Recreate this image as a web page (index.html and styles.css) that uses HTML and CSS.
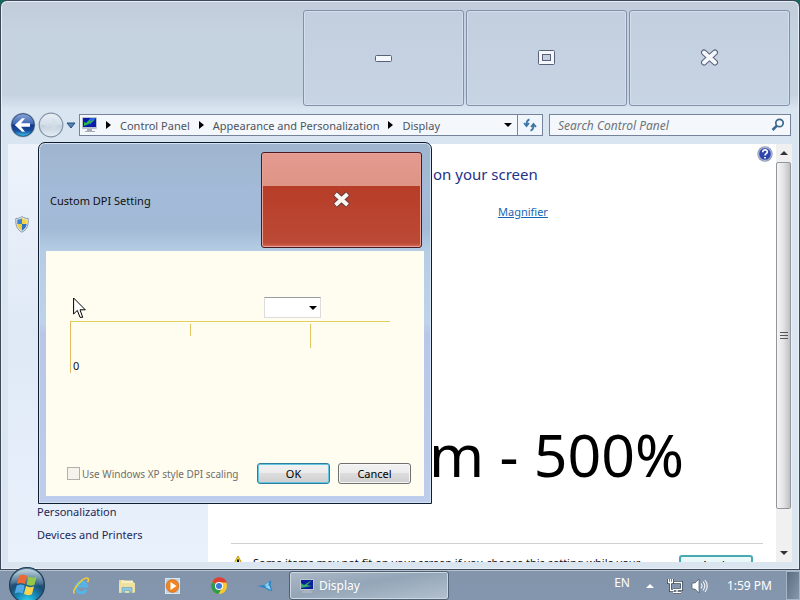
FILE: index.html
```html
<!DOCTYPE html>
<html lang="en">

<head>
  <meta charset="utf-8">
  <meta name="viewport" content="width=device-width, initial-scale=1.0">
  <title>Display</title>
  <link rel="stylesheet" href="styles.css">
</head>

<body>
  <div class="window">
    <div class="caption">
      <button type="button" class="caption-button" aria-label="Minimize">
        <svg width="18" height="8" viewBox="0 0 18 8"><rect x=".5" y="1.500" width="16" height="6" rx="1" fill="#f4f7fc" stroke="#5a6079"/></svg>
      </button>
      <button type="button" class="caption-button" aria-label="Restore">
        <svg width="18" height="16" viewBox="0 0 18 16"><rect x=".5" y=".5" width="16" height="14" rx="1" fill="#f4f7fc" stroke="#5a6079"/><rect x="4.500" y="4.500" width="8" height="6" fill="#c3cfe0" stroke="#5a6079"/></svg>
      </button>
      <button type="button" class="caption-button" aria-label="Close">
        <svg width="20" height="18" viewBox="0 0 20 18"><path d="M4 3.500 15 13.500M15 3.500 4 13.500" stroke="#5a6079" stroke-width="6" stroke-linecap="round"/><path d="M4 3.500 15 13.500M15 3.500 4 13.500" stroke="#f4f7fc" stroke-width="4" stroke-linecap="round"/></svg>
      </button>
    </div>

    <!-- back, forward, address and search -->
    <div class="navbar">
      <div class="travel">
        <button type="button" class="round-button back" aria-label="Back">
          <svg width="26" height="26" viewBox="0 0 26 26">
            <defs>
              <linearGradient id="backfill" x1="0" y1="0" x2="0" y2="1"><stop offset="0" stop-color="#8aa6d8"/><stop offset=".45" stop-color="#4067b4"/><stop offset=".5" stop-color="#13368c"/><stop offset=".75" stop-color="#174c9e"/><stop offset="1" stop-color="#3cc8f5"/></linearGradient>
            </defs>
            <circle cx="13" cy="13" r="12.300" fill="#9ba9bb"/><circle cx="13" cy="13" r="11.300" fill="url(#backfill)" stroke="#23406f" stroke-width=".8"/>
            <path d="M4.800 13 12 6.300h3L11 11.200h9v3.600h-9l4 4.900h-3z" fill="#fff"/>
          </svg>
        </button>
        <button type="button" class="round-button forward" aria-label="Forward">
          <svg width="26" height="26" viewBox="0 0 26 26">
            <defs>
              <linearGradient id="forwardfill" x1="0" y1="0" x2="0" y2="1"><stop offset="0" stop-color="#e9f0f6"/><stop offset=".48" stop-color="#d3dee9"/><stop offset=".52" stop-color="#c3d0dd"/><stop offset="1" stop-color="#e6eff7"/></linearGradient>
            </defs>
            <circle cx="13" cy="13" r="11.800" fill="url(#forwardfill)" stroke="#8493a5" stroke-width="1.200"/>
            <path d="M21 13l-7-6.500V11H7v4h7v4.500z" fill="#d3dde7" opacity=".7"/>
          </svg>
        </button>
        <svg class="recent" width="10" height="7" viewBox="0 0 10 7"><path d="M1 1h8L5 6z" fill="#4b83bb" stroke="#29507c"/></svg>
      </div>
      <nav class="address">
        <svg class="monitor" width="15" height="16" viewBox="0 0 15 16"><rect x="0" y="0" width="15" height="12" rx="1" fill="#b9c2cc"/><rect x="1" y="1" width="13" height="9" fill="#0a1cab"/><path d="M8 1h6L8 8z" fill="#2766dd"/><path d="M2 9V5l2 1 4-4v2l5-1-6 4z" fill="#2cb84e"/><path d="M5 12h5v2h3v1H3v-1h2z" fill="#a3acb7"/></svg>
        <span class="crumb-arrow"></span>
        <a href="#">Control Panel</a>
        <span class="crumb-arrow"></span>
        <a href="#">Appearance and Personalization</a>
        <span class="crumb-arrow"></span>
        <a href="#">Display</a>
        <span class="drop-arrow"></span>
      </nav>
      <button type="button" class="refresh" aria-label="Refresh">
        <svg width="14" height="14" viewBox="0 0 14 14" fill="none" stroke="#3b76a6" stroke-width="1.800"><path d="M6.500 1.500C4 2 3.500 3.500 3.500 7M1 5l2.500 3L6 5"/><path d="M7.500 12.500c2.500-.5 3-2 3-5.500M8 9l2.500-3L13 9" /></svg>
      </button>
      <div class="search">
        <input type="text" placeholder="Search Control Panel" aria-label="Search Control Panel">
        <svg width="14" height="14" viewBox="0 0 14 14" fill="none" stroke="#39688f"><circle cx="8.500" cy="5" r="3.700" stroke-width="1.700"/><path d="M5.700 7.800 1.500 12" stroke-width="2.500"/></svg>
      </div>
    </div>

    <div class="content">
      <div class="sidebar">
        <svg class="shield" width="14" height="17" viewBox="0 0 14 17"><path d="M7 .6C5 2 3 2.500.8 2.500c-.3 6 .7 11 6.200 13.700 5.500-2.700 6.500-7.700 6.200-13.700C11 2.500 9 2 7 .6z" fill="#e6ebf0" stroke="#8796a5"/><path d="M7 2.300C5.300 3.300 4 3.600 2.200 3.700L2.300 8H7z" fill="#3d86cd"/><path d="M7 2.300c1.700 1 3 1.300 4.800 1.400L11.700 8H7z" fill="#f4d54a"/><path d="M2.300 8H7v6.700C4 13 2.700 11 2.300 8z" fill="#f0cc3a"/><path d="M11.700 8H7v6.700c3-1.700 4.300-3.700 4.700-6.700z" fill="#2e73bd"/></svg>
        <div class="see-also">
          <a href="#">Personalization</a>
          <a href="#">Devices and Printers</a>
        </div>
      </div>
      <div class="main">
        <button type="button" class="help" aria-label="Help">
          <svg width="16" height="16" viewBox="0 0 16 16"><circle cx="8" cy="8" r="7.700" fill="#8c96ae"/><circle cx="8" cy="8" r="6.300" fill="#2f45ae" stroke="#e1e7f5" stroke-width=".7"/><path d="M5.700 6.200C5.700 3 10.500 3.300 10.300 6 10.200 7.700 8 7.600 8 9.500M8 11v1.600" fill="none" stroke="#fff" stroke-width="1.700"/></svg>
        </button>
        <h1>on your screen</h1>
        <p class="magnifier"><a href="#">Magnifier</a></p>
        <p class="size-label">m - 500%</p>
        <div class="warning">
          <svg width="14" height="14" viewBox="0 0 14 14"><path d="M7 1 13.300 13H.7z" fill="#f7dd2d" stroke="#b99a10"/><path d="M7 4.500V9M7 10.300V12" stroke="#111" stroke-width="2"/></svg>
          <span>Some items may not fit on your screen if you choose this setting while your</span>
          <button type="button" class="apply">Apply</button>
        </div>
      </div>
      <div class="scrollbar">
        <span class="scroll-arrow up"></span>
        <span class="thumb"><i></i><i></i><i></i></span>
        <span class="track"></span>
        <span class="scroll-arrow down"></span>
      </div>
    </div>
  </div>

  <div class="dialog" role="dialog" aria-labelledby="dialogtitle">
    <div class="dialog-title">
      <h2 id="dialogtitle">Custom DPI Setting</h2>
      <button type="button" class="dialog-close" aria-label="Close">
        <svg width="20" height="18" viewBox="0 0 20 18"><path d="M3 2.500 16 14.500M16 2.500 3 14.500" stroke="#693c3c" stroke-width="6"/><path d="M3.500 3 15.500 14M15.500 3 3.500 14" stroke="#fbf8f3" stroke-width="4"/></svg>
      </button>
    </div>
    <form class="dialog-body">
      <div class="combo">
        <select aria-label="Percentage of normal size"><option></option></select>
      </div>
      <div class="ruler">
        <span class="zero">0</span>
        <span class="tick"></span>
        <span class="tick long"></span>
      </div>
      <div class="dialog-footer">
        <input type="checkbox" id="xpscaling" disabled>
        <label for="xpscaling">Use Windows XP style DPI scaling</label>
        <button type="button" class="push-button default">OK</button>
        <button type="button" class="push-button">Cancel</button>
      </div>
    </form>
  </div>

  <div class="taskbar">
    <button type="button" class="start" aria-label="Start">
      <svg width="38" height="38" viewBox="0 0 38 38">
        <defs>
          <radialGradient id="orb" cx=".5" cy="1" r=".9"><stop offset="0" stop-color="#35dbf5"/><stop offset=".35" stop-color="#1689b8"/><stop offset=".65" stop-color="#1c4c74"/><stop offset="1" stop-color="#597d96"/></radialGradient>
          <linearGradient id="shine" x1="0" y1="0" x2="0" y2="1"><stop offset="0" stop-color="#d5e4ec" stop-opacity=".85"/><stop offset="1" stop-color="#8db2c4" stop-opacity=".15"/></linearGradient>
        </defs>
        <circle cx="19" cy="19" r="17.500" fill="url(#orb)" stroke="#233f57" stroke-width="1.200"/>
        <path d="M3 18C3-2 35-2 35 18 25 23 13 15 3 18z" fill="url(#shine)"/>
        <path d="M11 10c3-2 5-1.500 8 0l-2 8c-3-1.500-5-1.500-8 0z" fill="#ee6835"/>
        <path d="M20.500 10.500c3 1.500 5 1.500 8 .2l-2 8c-3 1.300-5 1.300-8-.2z" fill="#96c847"/>
        <path d="M8.700 19.500c3-1.500 5-1.500 8 0l-2 8c-3-1.500-5-1.500-8 0z" fill="#51a8e3"/>
        <path d="M18 20c3 1.500 5 1.500 8 .2l-2 8c-3 1.300-5 1.300-8-.2z" fill="#fad44c"/>
      </svg>
    </button>
    <div class="quick-launch">
      <button type="button" aria-label="Internet Explorer">
        <svg width="18" height="18" viewBox="0 0 18 18" fill="none"><path d="M14.300 12.500A5.300 5.300 0 1 1 14.500 9H5" stroke="#53b5ea" stroke-width="3"/><path d="M2.500 16.500C-1.500 14 12-1.500 16 1.500c1 .7.300 2.500-.5 3.500" stroke="#f0ca3a" stroke-width="1.600"/></svg>
      </button>
      <button type="button" aria-label="Windows Explorer">
        <svg width="18" height="18" viewBox="0 0 18 18"><path d="M1 3h5l1.500 2H16v11H1z" fill="#e6d488"/><path d="M3 3.500h12V8H3z" fill="#f8efbd"/><path d="M1 6h16v9.500H1z" fill="#eee0a1"/><path d="M4 16v-5.500h10V16h-2.500v-2.500h-5V16z" fill="#8fc5e6" stroke="#689db9" stroke-width=".6"/></svg>
      </button>
      <button type="button" aria-label="Media Player">
        <svg width="16" height="16" viewBox="0 0 16 16"><rect x=".5" y=".5" width="14" height="15" fill="#bed1df" stroke="#dde8ee"/><circle cx="7.500" cy="8" r="6.400" fill="#f08422" stroke="#ce6412" stroke-width=".6"/><path d="M5.500 4 11.500 8l-6 4z" fill="#fff"/></svg>
      </button>
      <button type="button" aria-label="Chrome">
        <svg width="18" height="18" viewBox="0 0 18 18"><circle cx="9" cy="9" r="8" fill="#fbc92c"/><path d="M9 9 2.100 5A8 8 0 0 1 16.900 5.500H9z" fill="#df4030"/><path d="M9 9 2.100 5A8 8 0 0 0 8.500 17L12 11z" fill="#329a4e"/><circle cx="9" cy="9" r="4" fill="#fff"/><circle cx="9" cy="9" r="3" fill="#3c79dd"/></svg>
      </button>
      <button type="button" aria-label="Plane">
        <svg width="18" height="14" viewBox="0 0 18 14"><path d="M1 7 5 6.500 8 6 14 2l1.500-.5L14.500 6 16.500 12 13 11.500 8.500 9 5 8z" fill="#2b86c7"/><path d="M8 6.500l5-3.500-1 4zM9 8l6 3-2-5z" fill="#94d5f4"/></svg>
      </button>
    </div>
    <button type="button" class="task">
      <svg width="14" height="14" viewBox="0 0 14 14"><rect x="0" y="0" width="14" height="11" rx="1" fill="#bcc7d2"/><rect x="1" y="1" width="12" height="9" fill="#0a1d9c"/><path d="M1 9V4l3 2 8-5-5 5 5 1z" fill="#35ad68"/><path d="M4 11h6v1h2v2H2v-2h2z" fill="#aab4bf"/></svg>
      Display
    </button>
    <div class="tray">
      <span class="language">EN</span>
      <span class="tray-arrow"></span>
      <svg class="network" width="16" height="16" viewBox="0 0 16 16" fill="none"><path d="M1.500 1v3.500h4V1M3.500 1v11.500H7M7 4.500h7.500v7H6M10 12v2.500M6 14.500h8" stroke="#3a4758" stroke-width="3"/><path d="M1.500 1v3.500h4V1M3.500 1v11.500H7M7 4.500h7.500v7H6M10 12v2.500M6 14.500h8" stroke="#fff" stroke-width="1.300"/></svg>
      <svg width="17" height="16" viewBox="0 0 17 16"><path d="M1 5h3l4-4v14l-4-4H1z" fill="#fff" stroke="#475467" stroke-width=".7"/><path d="M10 5.500q2 2.500 0 5M12 3.500q3.500 4.500 0 9M14 2q4.500 6 0 12" fill="none" stroke="#edf2f7" stroke-width="1.200"/></svg>
      <time>1:59 PM</time>
    </div>
    <button type="button" class="show-desktop" aria-label="Show desktop"></button>
  </div>

  <svg class="cursor" width="13" height="22" viewBox="0 0 13 22"><path d="M.6 1v16l3.700-3.600L7 20.300h2.700L7 12.800h5.300z" fill="#fff" stroke="#000"/></svg>
</body>

</html>
```
FILE: styles.css
```css
* {
  box-sizing: border-box;
}

body {
  margin: 0;
  height: 100vh;
  display: flex;
  flex-direction: column;
  overflow: hidden;
  background-color: #11695c;
  font-family: "Noto Sans", "Open Sans", sans-serif;
  font-size: 11px;
  color: #111;
}

button {
  font: inherit;
  padding: 0;
  margin: 0;
  display: flex;
  flex: none;
  align-items: center;
  justify-content: center;
}

svg {
  display: block;
  flex: none;
}

h1,
h2,
p {
  margin: 0;
  font-weight: normal;
}

/* main window */
.window {
  flex: 1;
  min-height: 0;
  display: flex;
  flex-direction: column;
  padding: 0 7px 7px;
  border: 1px solid #3e4859;
  border-radius: 7px 7px 0 0;
  background: linear-gradient(#c2ccda 0, #c5d2e0 30px, #c5d3e1 94px, #d9e5f0 108px, #dae5f0 100%);
  box-shadow: inset 0 0 0 1px #e7eff7;
}

.caption {
  display: flex;
  justify-content: flex-end;
  gap: 2px;
  padding: 9px 2px 0 0;
}

.caption-button {
  width: 161px;
  height: 96px;
  border: 1px solid #8290a9;
  border-radius: 3px;
  background: linear-gradient(#c3cfdf, #c7d4e4);
  box-shadow: inset 0 0 0 1px #d2deeb;
}

.navbar {
  display: flex;
  align-items: center;
  height: 38px;
  padding: 0 1px 0 2px;
}

.travel {
  display: flex;
  align-items: center;
  gap: 2px;
  width: 69px;
}

.round-button {
  border: none;
  background: none;
}

.address {
  flex: 1;
  display: flex;
  align-items: center;
  height: 22px;
  padding: 0 5px 0 2px;
  border: 1px solid #76849b;
  background-color: #f4f8fc;
}

.address a {
  color: #4d535d;
  text-decoration: none;
}

.crumb-arrow {
  margin: 0 9px;
  border: 4px solid transparent;
  border-left: 5px solid #000;
  border-right: 0;
}

.drop-arrow {
  margin-left: auto;
  border: 4px solid transparent;
  border-top: 4px solid #000;
  border-bottom: 0;
}

.refresh {
  width: 25px;
  height: 22px;
  border: 1px solid #76849b;
  border-left: none;
  background-color: #f0f6fb;
}

.search {
  display: flex;
  align-items: center;
  width: 242px;
  height: 22px;
  margin-left: 6px;
  padding: 0 5px 0 8px;
  border: 1px solid #76849b;
  background-color: #f4f8fc;
}

.search input {
  flex: 1;
  min-width: 0;
  padding: 0;
  border: none;
  outline: none;
  background: none;
  font: inherit;
  font-size: 12px;
  font-style: italic;
}

.search input::placeholder {
  color: #6e737a;
}

.content {
  flex: 1;
  min-height: 0;
  display: flex;
  overflow: hidden;
  background-color: #fff;
}

.sidebar {
  width: 200px;
  display: flex;
  flex-direction: column;
  justify-content: space-between;
  padding: 72px 7px 16px;
  background: linear-gradient(#eef3fb, #dfe9f6 45%, #e9f1fc);
}

.see-also {
  display: flex;
  flex-direction: column;
  padding-left: 22px;
  line-height: 23px;
}

.see-also a {
  color: #1d2858;
  text-decoration: none;
}

.main {
  flex: 1;
  min-width: 0;
  position: relative;
  padding: 18px 13px 0 23px;
}

.help {
  position: absolute;
  top: 2px;
  right: 3px;
  border: none;
  background: none;
}

.main h1 {
  padding-left: 202px;
  font-size: 15px;
  line-height: 24px;
  color: #1e3287;
}

.magnifier {
  margin-top: 16px;
  padding-left: 267px;
  line-height: 20px;
}

.magnifier a {
  color: #1766b5;
}

.size-label {
  height: 321px;
  padding: 190px 0 0 198px;
  font-size: 59px;
  line-height: 84px;
  white-space: nowrap;
  color: #000;
}

.warning {
  display: flex;
  align-items: flex-start;
  gap: 8px;
  padding-top: 11px;
  border-top: 1px solid #d0d0d0;
  white-space: nowrap;
}

.apply {
  width: 74px;
  height: 24px;
  margin: 0 10px 0 auto;
  border: 2px solid #48a9b5;
  border-radius: 3px;
  background: linear-gradient(#eefafa, #d4eef1);
  line-height: 16px;
  align-items: flex-start;
}

.scrollbar {
  width: 16px;
  display: flex;
  flex-direction: column;
  background-color: #f0f0f1;
}

.scroll-arrow {
  height: 18px;
  display: flex;
  align-items: center;
  justify-content: center;
}

.scroll-arrow::before {
  content: "";
  border: 4px solid transparent;
}

.up::before {
  border-top: 0;
  border-bottom-color: #333;
}

.down::before {
  border-bottom: 0;
  border-top-color: #333;
}

.thumb {
  flex: 347;
  display: flex;
  flex-direction: column;
  align-items: center;
  justify-content: center;
  gap: 2px;
  margin-right: 1px;
  border: 1px solid #93979c;
  border-radius: 2px;
  background: linear-gradient(to right, #f5f5f6, #e3e3e5 50%, #bfc0c3);
}

.thumb i {
  width: 8px;
  height: 1px;
  background-color: #555;
}

.track {
  flex: 35;
}

/* dialog window over the main one */
.dialog {
  position: absolute;
  left: 38px;
  top: 142px;
  width: 394px;
  padding: 0 7px 7px;
  border: 1px solid #101c30;
  border-radius: 7px 7px 0 0;
  background: linear-gradient(#9fb5ce 0, #a3bbd8 50px, #a2bad6 86px, #b5cde4 108px, #bdd3ea 180px, #b9c6e8 190px, #bdcdeb 100%);
  box-shadow: inset 0 0 0 1px #d3e3f1;
}

.dialog-title {
  display: flex;
  align-items: flex-start;
  justify-content: space-between;
  height: 108px;
  padding: 9px 2px 0 4px;
}

.dialog-title h2 {
  font-size: 11px;
  line-height: 98px;
}

.dialog-close {
  width: 161px;
  height: 96px;
  border: 1px solid #4a1b25;
  border-radius: 3px;
  background: linear-gradient(#e59a90, #dd9586 33px, #b73d28 33px, #bc4a36 90px, #d76c58);
  box-shadow: inset 0 0 0 1px #e9a298;
}

.dialog-body {
  height: 245px;
  display: flex;
  flex-direction: column;
  padding: 46px 13px 12px 21px;
  background-color: #fffcf0;
}

.combo {
  align-self: flex-end;
  position: relative;
  width: 57px;
  margin-right: 90px;
}

.combo select {
  display: block;
  width: 100%;
  height: 21px;
  appearance: none;
  border: 1px solid #dcdcdc;
  border-top-color: #9a9a9f;
  border-radius: 0;
  background-color: #fff;
}

.combo::after {
  content: "";
  position: absolute;
  right: 4px;
  top: 9px;
  border: 4px solid transparent;
  border-top-color: #000;
  border-bottom: 0;
}

.ruler {
  display: flex;
  width: 320px;
  height: 52px;
  margin: 3px 0 0 3px;
  border-top: 1px solid #e3d05a;
  border-left: 1px solid #e2bb64;
}

.zero {
  align-self: flex-end;
  width: 119px;
  padding-left: 2px;
  line-height: 14px;
}

.tick {
  width: 120px;
  height: 12px;
  margin-top: 2px;
  border-left: 1px solid #e0c662;
}

.long {
  width: 79px;
  height: 24px;
}

.dialog-footer {
  display: flex;
  align-items: center;
  margin-top: auto;
}

.dialog-footer input {
  flex: none;
  appearance: none;
  width: 13px;
  height: 13px;
  margin: 0 2px 0 0;
  border: 1px solid #b1b1aa;
  background-color: #f4f3ec;
}

.dialog-footer label {
  flex: 1;
  font-size: 10px;
  color: #6f6f68;
  white-space: nowrap;
}

.push-button {
  width: 73px;
  height: 21px;
  margin-left: 8px;
  border: 1px solid #707070;
  border-radius: 3px;
  background: linear-gradient(#f2f2f2, #ebebeb 50%, #dddddd 50%, #cfcfcf);
  box-shadow: inset 0 0 0 1px #f8f8f8;
}

.default {
  border-color: #2f7c9f;
  box-shadow: inset 0 0 0 1px #63c6e2;
}

/* taskbar */
.taskbar {
  position: relative;
  height: 30px;
  display: flex;
  align-items: center;
  padding-left: 58px;
  border-top: 1px solid #b5c2d1;
  background: linear-gradient(#8295ab, #8396ae);
  font-size: 12px;
  color: #fff;
}

.start {
  position: absolute;
  left: 8px;
  bottom: -4px;
  border: none;
  background: none;
}

.quick-launch {
  display: flex;
}

.quick-launch button {
  width: 46px;
  height: 28px;
  border: none;
  background: none;
}

.task {
  width: 160px;
  height: 29px;
  justify-content: flex-start;
  gap: 5px;
  margin-left: 1px;
  padding-left: 10px;
  border: 1px solid #4f6072;
  border-radius: 3px;
  background: linear-gradient(to bottom right, #acb9c7, #93a5b7 45%, #b3c1ce);
  box-shadow: inset 0 0 0 1px #ccd7e1;
  color: #fff;
}

.tray {
  display: flex;
  align-items: center;
  margin-left: auto;
}

.language {
  line-height: 20px;
  padding-bottom: 5px;
}

.tray-arrow {
  margin: 0 13px 0 16px;
  border: 4px solid transparent;
  border-top: 0;
  border-bottom-color: #fff;
}

.network {
  margin-right: 8px;
}

.tray time {
  margin: 0 14px 0 19px;
}

.show-desktop {
  width: 14px;
  height: 29px;
  border: 1px solid #a6b5c5;
  background: linear-gradient(to bottom right, #5b6d80, #8598ab);
}

.cursor {
  position: absolute;
  left: 73px;
  top: 297px;
}
```
